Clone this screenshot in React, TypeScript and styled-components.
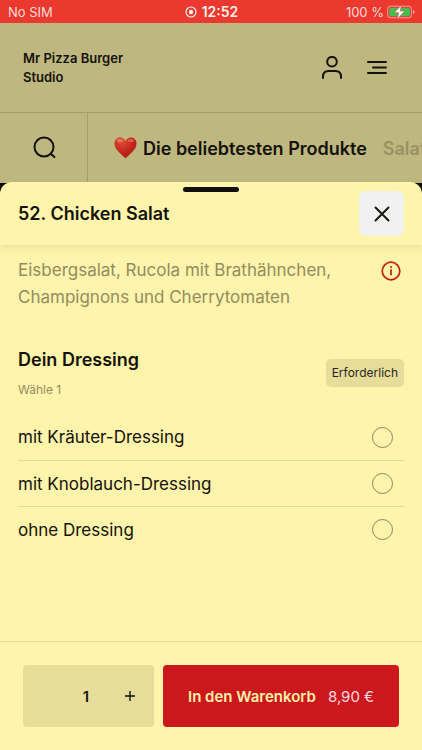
import React, { useState } from "react";
import styled, { createGlobalStyle } from "styled-components";

const GlobalStyle = createGlobalStyle`
  *, *::before, *::after { box-sizing: border-box; }
  body {
    margin: 0;
    background: #0d0b07;
    color: #14120a;
    font-family: Inter, "Liberation Sans", sans-serif;
  }
  button, input { font: inherit; color: inherit; }
  button { border: 0; padding: 0; background: none; cursor: pointer; }
  h1, h2, p, ul { margin: 0; padding: 0; }
`;

const Screen = styled.div`
  display: flex;
  flex-direction: column;
  min-height: 100vh;
`;

const StatusBar = styled.div`
  display: grid;
  grid-template-columns: 1fr auto 1fr;
  align-items: center;
  height: 23px;
  padding: 0 7px 0 8px;
  background: #eb392f;
  color: #ffdcd6;
  font-size: 13px;
`;

const Clock = styled.div`
  display: flex;
  align-items: center;
  gap: 5px;
  color: #fff0ec;
  font-size: 14px;
  font-weight: 600;
  line-height: 20px;
`;

const Power = styled.div`
  display: flex;
  align-items: center;
  justify-content: flex-end;
  gap: 3px;
`;

const SiteHeader = styled.header`
  display: flex;
  align-items: center;
  justify-content: space-between;
  height: 90px;
  padding: 0 31px 0 23px;
  background: #bfb780;
  border-bottom: 1px solid #a59e6d;
`;

const Brand = styled.a`
  width: 120px;
  color: inherit;
  font-size: 13px;
  font-weight: 600;
  line-height: 19px;
  text-decoration: none;
`;

const HeaderActions = styled.div`
  display: flex;
  gap: 17px;
`;

const IconButton = styled.button`
  display: grid;
  place-items: center;
  width: 28px;
  height: 28px;
`;

const CategoryBar = styled.nav`
  display: flex;
  height: 70px;
  background: #bfb780;
  overflow: hidden;
`;

const SearchButton = styled.button`
  display: grid;
  place-items: center;
  flex: 0 0 88px;
  border-right: 1px solid #a59e6d;
`;

const Categories = styled.div`
  display: flex;
  flex: 1;
  align-items: center;
  gap: 16px;
  min-width: 0;
  padding-left: 26px;
  overflow: hidden;
`;

const Category = styled.a<{ $active?: boolean }>`
  display: flex;
  align-items: center;
  flex-shrink: 0;
  gap: 6px;
  color: ${(p) => (p.$active ? "#14120a" : "#999264")};
  font-size: 18px;
  font-weight: 600;
  text-decoration: none;
  white-space: nowrap;
`;

const Sheet = styled.section`
  display: flex;
  flex: 1;
  flex-direction: column;
  margin-top: -1px;
  border-radius: 12px 12px 0 0;
  background: #fff4ab;
`;

const CornerBackdrop = styled.div`
  display: flex;
  flex: 1;
  flex-direction: column;
  background: #0d0b07;
`;

const SheetHeader = styled.header`
  position: relative;
  display: flex;
  align-items: center;
  justify-content: space-between;
  height: 63px;
  padding: 0 18px;
  box-shadow: 0 3px 7px rgba(90, 80, 20, 0.1);
`;

const Handle = styled.span`
  position: absolute;
  top: 5px;
  left: 50%;
  width: 56px;
  height: 5px;
  border-radius: 3px;
  background: #11100c;
  transform: translateX(-50%);
`;

const Title = styled.h1`
  font-size: 18px;
  font-weight: 600;
  line-height: 24px;
`;

const CloseButton = styled.button`
  display: grid;
  place-items: center;
  width: 45px;
  height: 45px;
  border-radius: 7px;
  background: #f1f1f1;
`;

const SheetBody = styled.div`
  flex: 1;
  padding: 12px 18px 24px;
`;

const Intro = styled.div`
  display: flex;
  align-items: flex-start;
  justify-content: space-between;
`;

const Description = styled.p`
  color: #938c60;
  font-size: 17px;
  line-height: 27px;
`;

const InfoButton = styled.button`
  display: grid;
  flex-shrink: 0;
  place-items: center;
  width: 26px;
  height: 27px;
`;

const GroupHeader = styled.div`
  display: flex;
  align-items: center;
  justify-content: space-between;
  margin-top: 35px;
  margin-bottom: 14px;
`;

const GroupTitle = styled.h2`
  font-size: 18px;
  font-weight: 600;
  line-height: 28px;
`;

const GroupHint = styled.p`
  margin-top: 6px;
  color: #938c60;
  font-size: 12px;
  line-height: 20px;
`;

const Badge = styled.span`
  padding: 0 6px;
  border-radius: 5px;
  background: #e6dd9b;
  color: #2a2719;
  font-size: 12px;
  line-height: 28px;
`;

const Options = styled.ul`
  list-style: none;
`;

const Option = styled.li`
  height: 46px;
  & + & { border-top: 1px solid #e4da98; }
`;

const OptionLabel = styled.label`
  display: flex;
  align-items: center;
  justify-content: space-between;
  height: 100%;
  padding-right: 11px;
  font-size: 17px;
  cursor: pointer;
`;

const Radio = styled.input`
  appearance: none;
  width: 21px;
  height: 21px;
  margin: 0;
  border: 1px solid #8e875a;
  border-radius: 50%;
  &:checked { border: 6px solid #cc171d; }
`;

const Footer = styled.footer`
  display: flex;
  gap: 9px;
  padding: 23px;
  border-top: 1px solid #e4da98;
`;

const Stepper = styled.div`
  display: grid;
  grid-template-columns: 43fr 40fr 48fr;
  flex: 5;
  height: 62px;
  border-radius: 4px;
  background: #e6dd9b;
`;

const StepButton = styled.button`
  display: grid;
  place-items: center;
  &:disabled { visibility: hidden; }
`;

const Quantity = styled.output`
  align-self: center;
  font-size: 15px;
  font-weight: 600;
  text-align: center;
`;

const AddButton = styled.button`
  display: flex;
  align-items: center;
  justify-content: center;
  flex: 9;
  gap: 12px;
  height: 62px;
  border-radius: 4px;
  background: #cc171d;
  color: #fff0a8;
  font-size: 15px;
  font-weight: 600;
  white-space: nowrap;
`;

const Price = styled.span`
  color: #ffdbe0;
  font-weight: 400;
`;

const RecordIcon = () => (
  <svg width="12" height="12" viewBox="0 0 12 12" aria-hidden="true">
    <circle cx="6" cy="6" r="5" fill="none" stroke="currentColor" strokeWidth="1.2" />
    <circle cx="6" cy="6" r="2.2" fill="currentColor" />
  </svg>
);

const BatteryIcon = () => (
  <svg width="28" height="14" viewBox="0 0 28 14" aria-hidden="true">
    <rect x="0.6" y="1.2" width="24" height="11.6" rx="3.2" fill="none" stroke="#f7a19a" />
    <rect x="2.2" y="2.8" width="20.8" height="8.4" rx="1.8" fill="#45bd50" />
    <path d="M26 5v4c1-.3 1.5-1 1.5-2S27 5.300 26 5z" fill="#f7a19a" />
    <path d="M14.500 0 7.300 7.700h4.400L10.200 14l7.600-8h-4.600z" fill="#fff" stroke="#df4c3c" strokeWidth="0.6" />
  </svg>
);

const UserIcon = () => (
  <svg width="22" height="24" viewBox="0 0 22 24" fill="none" stroke="currentColor" strokeWidth="2" strokeLinecap="round" aria-hidden="true">
    <circle cx="11" cy="5.700" r="4.800" />
    <path d="M2 22v-1.500C2 16.700 4.200 15 7.500 15h7c3.300 0 5.500 1.700 5.500 5.500V22" />
  </svg>
);

const MenuIcon = () => (
  <svg width="22" height="16" viewBox="0 0 22 16" fill="none" stroke="currentColor" strokeWidth="2" strokeLinecap="round" aria-hidden="true">
    <path d="M2 2h18M7 7.500h13M2 13h18" />
  </svg>
);

const SearchIcon = () => (
  <svg width="24" height="24" viewBox="0 0 24 24" fill="none" stroke="currentColor" strokeWidth="2" strokeLinecap="round" aria-hidden="true">
    <circle cx="12" cy="11" r="9.500" />
    <path d="m18.800 17.700 3.600 3.400" />
  </svg>
);

const HeartIcon = () => (
  <svg width="23" height="22" viewBox="0 0 23 22" aria-hidden="true">
    <defs>
      <radialGradient id="heart" cx="0.35" cy="0.2" r="0.85">
        <stop offset="0" stopColor="#df4b35" />
        <stop offset="0.55" stopColor="#c5271d" />
        <stop offset="1" stopColor="#a51916" />
      </radialGradient>
    </defs>
    <path d="M11.500 21.500C9.500 18.500.5 13.500.5 6.500.5 3 3 .5 6 .5c2.500 0 4.500 1.400 5.500 3.700C12.500 1.900 14.500.5 17 .5c3 0 5.500 2.500 5.500 6 0 7-9 12-11 15z" fill="url(#heart)" />
    <ellipse cx="5.800" cy="3.600" rx="3.300" ry="1.800" fill="#f09b7c" opacity="0.55" />
    <ellipse cx="17" cy="3.400" rx="3" ry="1.500" fill="#f09b7c" opacity="0.45" />
  </svg>
);

const CloseIcon = () => (
  <svg width="16" height="16" viewBox="0 0 16 16" fill="none" stroke="currentColor" strokeWidth="1.900" strokeLinecap="round" aria-hidden="true">
    <path d="m1.500 1.500 13 13m0-13-13 13" />
  </svg>
);

const InfoIcon = () => (
  <svg width="20" height="20" viewBox="0 0 20 20" fill="none" stroke="#c7200f" aria-hidden="true">
    <circle cx="10" cy="10" r="8.800" strokeWidth="1.700" />
    <path d="M10 8.300v6" strokeWidth="1.700" />
    <circle cx="10" cy="6" r="1" fill="#c7200f" stroke="none" />
  </svg>
);

const StepIcon = ({ plus }: { plus?: boolean }) => (
  <svg width="10" height="10" viewBox="0 0 10 10" stroke="currentColor" strokeWidth="1.400" aria-hidden="true">
    <path d={plus ? "M0 5h10M5 0v10" : "M0 5h10"} />
  </svg>
);

const dressings = ["mit Kräuter-Dressing", "mit Knoblauch-Dressing", "ohne Dressing"];

export default function App() {
  const [quantity, setQuantity] = useState(1);
  const total = (quantity * 8.9).toFixed(2).replace(".", ",");

  return (
    <>
      <GlobalStyle />
      <Screen>
        <StatusBar>
          <span>No SIM</span>
          <Clock><RecordIcon />12:52</Clock>
          <Power>100 %<BatteryIcon /></Power>
        </StatusBar>
        <SiteHeader>
          <Brand href="#">Mr Pizza Burger Studio</Brand>
          <HeaderActions>
            <IconButton aria-label="Konto"><UserIcon /></IconButton>
            <IconButton aria-label="Menü"><MenuIcon /></IconButton>
          </HeaderActions>
        </SiteHeader>
        <CategoryBar>
          <SearchButton aria-label="Suche"><SearchIcon /></SearchButton>
          <Categories>
            <Category href="#beliebt" $active><HeartIcon />Die beliebtesten Produkte</Category>
            <Category href="#salate">Salate</Category>
          </Categories>
        </CategoryBar>
        <CornerBackdrop>
          <Sheet>
            <SheetHeader>
              <Handle />
              <Title>52. Chicken Salat</Title>
              <CloseButton aria-label="Schließen"><CloseIcon /></CloseButton>
            </SheetHeader>
            <SheetBody>
              <Intro>
                <Description>Eisbergsalat, Rucola mit Brathähnchen, Champignons und Cherrytomaten</Description>
                <InfoButton aria-label="Produktinformationen"><InfoIcon /></InfoButton>
              </Intro>
              <GroupHeader>
                <div>
                  <GroupTitle id="dressing">Dein Dressing</GroupTitle>
                  <GroupHint>Wähle 1</GroupHint>
                </div>
                <Badge>Erforderlich</Badge>
              </GroupHeader>
              <Options role="radiogroup" aria-labelledby="dressing">
                {dressings.map((name) => (
                  <Option key={name}>
                    <OptionLabel>
                      {name}
                      <Radio type="radio" name="dressing" value={name} />
                    </OptionLabel>
                  </Option>
                ))}
              </Options>
            </SheetBody>
            <Footer>
              <Stepper>
                <StepButton aria-label="Weniger" disabled={quantity === 1} onClick={() => setQuantity(quantity - 1)}>
                  <StepIcon />
                </StepButton>
                <Quantity>{quantity}</Quantity>
                <StepButton aria-label="Mehr" onClick={() => setQuantity(quantity + 1)}>
                  <StepIcon plus />
                </StepButton>
              </Stepper>
              <AddButton>In den Warenkorb<Price>{total} €</Price></AddButton>
            </Footer>
          </Sheet>
        </CornerBackdrop>
      </Screen>
    </>
  );
}
